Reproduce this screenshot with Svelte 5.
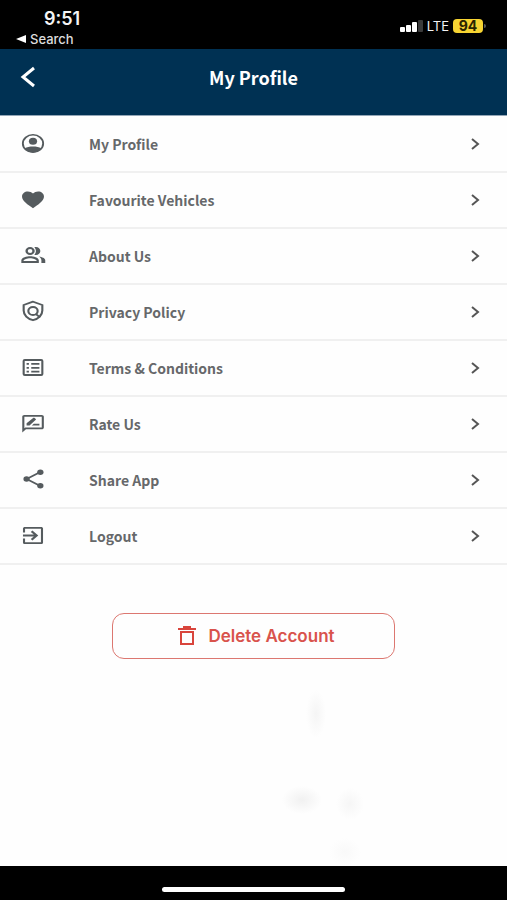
<script>
    let items = [
        { id: 'profile', label: 'My Profile' },
        { id: 'favourites', label: 'Favourite Vehicles' },
        { id: 'about', label: 'About Us' },
        { id: 'privacy', label: 'Privacy Policy' },
        { id: 'terms', label: 'Terms & Conditions' },
        { id: 'rate', label: 'Rate Us' },
        { id: 'share', label: 'Share App' },
        { id: 'logout', label: 'Logout' }
    ]
</script>

<div class="screen">
    <div class="status">
        <div class="status-left">
            <span class="time">9:51</span>
            <button class="return">
                <svg width="10" height="8" viewBox="0 0 10 8" aria-hidden="true"><path d="M0 4 10 0v8z" /></svg>
                Search
            </button>
        </div>
        <div class="status-right">
            <svg class="signal" width="23" height="12" viewBox="0 0 23 12" aria-hidden="true">
                <rect x="0" y="7" width="5" height="5" rx="1" />
                <rect x="6" y="5" width="5" height="7" rx="1" />
                <rect x="12" y="2" width="5" height="10" rx="1" />
                <rect x="18" y="0" width="5" height="12" rx="1" fill="#3a3a3a" />
            </svg>
            <span class="network">LTE</span>
            <span class="battery">94</span>
        </div>
    </div>

    <header>
        <button class="back" aria-label="Back">
            <svg width="16" height="22" viewBox="0 0 16 22"><path d="M14 2 3 11l11 9" /></svg>
        </button>
        <h1>My Profile</h1>
    </header>

    <main>
        <nav>
            {#each items as item (item.id)}
                <button class="row">
                    <svg class="icon" width="28" height="24" viewBox="0 0 24 24" preserveAspectRatio="none" aria-hidden="true">
                        {#if item.id === 'profile'}
                            <circle cx="12" cy="11.500" r="8.700" fill="none" stroke="currentColor" stroke-width="1.600" />
                            <circle cx="12" cy="9.300" r="3.500" />
                            <path d="M5 16.500c1.500-1.500 4.300-2 7-2s5.500.5 7 2c-1.600 2.400-4.100 4-7 4s-5.400-1.600-7-4z" />
                        {:else if item.id === 'favourites'}
                            <path d="m12 20.350-1.450-1.320C5.400 15 2.600 12 2.600 8.500 2.600 5.600 4.800 3.500 7.600 3.500c1.740 0 3.310.8 4.400 2 1.090-1.200 2.660-2 4.400-2 2.800 0 5 2.100 5 5 0 3.500-2.800 6.500-7.950 10.540z" />
                        {:else if item.id === 'about'}
                            <path fill-rule="evenodd" d="M9.500 3a4 4 0 1 0 0 8 4 4 0 0 0 0-8zm0 2a2 2 0 1 1 0 4 2 2 0 0 1 0-4zM9.500 12.200c-2.700 0-7.500 1.400-7.500 4.100V19h15v-2.700c0-2.700-4.800-4.100-7.500-4.100zM15 17H4v-.7c.2-.7 2.900-2.100 5.500-2.100s5.300 1.400 5.500 2.100z" />
                            <path d="M14.500 11c2.200 0 3.800-1.800 3.800-4s-1.600-4-3.800-4c-.5 0-1 .1-1.400.3.900 1 1.400 2.300 1.400 3.700s-.5 2.700-1.400 3.700c.4.2.9.3 1.400.3zM17 12.500c1.400.9 2.200 2.200 2.200 3.800V19h3.300v-2.700c0-2-2.700-3.300-5.500-3.800z" />
                        {:else if item.id === 'privacy'}
                            <path d="M12 1.700 4 5V10.500c0 4.700 3.300 8.500 8 9.700 4.700-1.200 8-5 8-9.700V5z" fill="none" stroke="currentColor" stroke-width="1.800" />
                            <circle cx="12" cy="11" r="4" fill="none" stroke="currentColor" stroke-width="1.800" />
                            <path d="m14.300 13.800 3.700 3.500" stroke="currentColor" stroke-width="1.800" />
                        {:else if item.id === 'terms'}
                            <rect x="4" y="4" width="16" height="15" rx="1" fill="none" stroke="currentColor" stroke-width="1.800" />
                            <path d="M6.500 7h2v1.700h-2zm4 0h7v1.700h-7zm-4 4h2v1.700h-2zm4 0h7v1.700h-7zm-4 3.700h2v1.700h-2zm4 0h7v1.700h-7z" />
                        {:else if item.id === 'rate'}
                            <path d="M19.500 3H4.500c-1 0-1.700.8-1.700 1.800V20.500L6 17.300h13.500c1 0 1.800-.8 1.800-1.800V4.800c0-1-.8-1.800-1.800-1.800zm0 12.500H5.400l-.8.800V4.800h14.900z" />
                            <path d="M11 13.500h6.500v-1.700h-4.800zM14.400 7.800c.2-.2.200-.5 0-.7l-1.300-1.300c-.2-.2-.5-.2-.7 0L6.500 11.300v2.200H9z" />
                        {:else if item.id === 'share'}
                            <path d="M18.300 4 6.500 11l11.800 7" fill="none" stroke="currentColor" stroke-width="1.600" />
                            <circle cx="18.300" cy="4.200" r="2.700" />
                            <circle cx="6.500" cy="11" r="2.700" />
                            <circle cx="18.300" cy="17.800" r="2.700" />
                        {:else}
                            <path d="m10.100 15.100 1.400 1.400 5-5-5-5-1.400 1.400 2.600 2.600H3.400v2h9.300zM19 3H5c-.9 0-1.600.7-1.600 1.600v3.900h1.800V4.800h13.600v13.400H5.200v-3.700H3.400v3.900c0 .9.7 1.600 1.600 1.600h14c.9 0 1.600-.7 1.600-1.600V4.600c0-.9-.7-1.600-1.600-1.600z" />
                        {/if}
                    </svg>
                    <span>{item.label}</span>
                    <svg class="chevron" width="9" height="12" viewBox="0 0 9 12" aria-hidden="true"><path d="m1 1 6 5-6 5" /></svg>
                </button>
            {/each}
        </nav>

        <button class="delete">
            <svg width="18" height="20" viewBox="0 0 18 20" aria-hidden="true">
                <path d="M0 3h18M5 1h8" />
                <path d="M3 6h12v12H3z" />
            </svg>
            Delete Account
        </button>
    </main>

    <footer><div class="home-bar"></div></footer>
</div>

<style>
    :global(body) {
        margin: 0;
        background: #fefefe;
    }
    .screen {
        min-height: 100vh;
        display: flex;
        flex-direction: column;
        font-family: "Noto Sans CJK SC", "Noto Sans", sans-serif;
    }
    button {
        background: none;
        border: 0;
        padding: 0;
        margin: 0;
        font-family: inherit;
        color: inherit;
        cursor: pointer;
    }
    .status {
        display: flex;
        justify-content: space-between;
        height: 49px;
        padding: 0 24px 0 16px;
        box-sizing: border-box;
        background: #000;
        color: #f4f4f4;
        font-family: Inter, sans-serif;
    }
    .status-left {
        display: flex;
        flex-direction: column;
        padding-top: 8px;
    }
    .time {
        padding-left: 28px;
        font-size: 18px;
        font-weight: 600;
        line-height: 22px;
    }
    .return {
        display: flex;
        align-items: center;
        gap: 4px;
        font-size: 13px;
        font-weight: 500;
        line-height: 18px;
        color: #ddd;
    }
    .return svg, .signal {
        fill: #fff;
    }
    .status-right {
        display: flex;
        align-items: center;
        gap: 4px;
        padding-top: 2px;
    }
    .network {
        font-size: 13px;
    }
    .battery {
        position: relative;
        width: 30px;
        border-radius: 4px;
        background: #f7d432;
        color: #2b2500;
        font-size: 14px;
        font-weight: 700;
        line-height: 14px;
        text-align: center;
    }
    .battery::after {
        content: "";
        position: absolute;
        left: 100%;
        top: 5px;
        margin-left: 1px;
        width: 2px;
        height: 4px;
        border-radius: 0 2px 2px 0;
        background: #555;
    }
    header {
        display: grid;
        grid-template-columns: 56px 1fr 56px;
        align-items: center;
        height: 66px;
        padding-bottom: 10px;
        box-sizing: border-box;
        background: #003153;
        color: #fff;
    }
    .back {
        display: flex;
        padding-left: 20px;
    }
    .back path {
        fill: none;
        stroke: #fff;
        stroke-width: 3;
    }
    h1 {
        margin: 0;
        font-size: 18px;
        font-weight: 700;
        line-height: 24px;
        text-align: center;
    }
    main {
        flex: 1;
        display: flex;
        flex-direction: column;
        align-items: center;
        border-top: 1px solid #93a6b7;
        background:
            radial-gradient(ellipse 20px 14px at 302px 684px, #f1f1f1, transparent),
            radial-gradient(ellipse 14px 16px at 350px 688px, #f6f6f6, transparent),
            radial-gradient(ellipse 10px 24px at 316px 598px, #f5f5f5, transparent),
            radial-gradient(ellipse 16px 14px at 345px 736px, #f9f9f9, transparent),
            #fefefe;
    }
    nav {
        width: 100%;
    }
    .row {
        display: flex;
        align-items: center;
        width: 100%;
        height: 56px;
        padding: 0 27px 0 19px;
        box-sizing: border-box;
        border-bottom: 2px solid #f0f0f0;
        color: #555b5e;
        text-align: left;
    }
    .row:first-child {
        height: 57px;
    }
    .row span {
        flex: 1;
        padding-left: 42px;
        font-size: 14px;
        font-weight: 700;
        line-height: 20px;
        color: #66686a;
    }
    .icon {
        fill: currentColor;
    }
    .chevron path {
        fill: none;
        stroke: #555;
        stroke-width: 2;
    }
    .delete {
        display: flex;
        align-items: center;
        justify-content: center;
        gap: 12px;
        width: 56%;
        height: 46px;
        margin: 48px 0 40px;
        padding-left: 6px;
        border: 1px solid #dc7770;
        border-radius: 12px;
        color: #d9534c;
        font-family: Inter, sans-serif;
        font-size: 17px;
        font-weight: 600;
    }
    .delete path {
        fill: none;
        stroke: #d9453c;
        stroke-width: 2;
    }
    footer {
        display: flex;
        justify-content: center;
        height: 34px;
        padding-top: 21px;
        box-sizing: border-box;
        background: #000;
    }
    .home-bar {
        width: 36%;
        height: 5px;
        border-radius: 3px;
        background: #fff;
    }
</style>
